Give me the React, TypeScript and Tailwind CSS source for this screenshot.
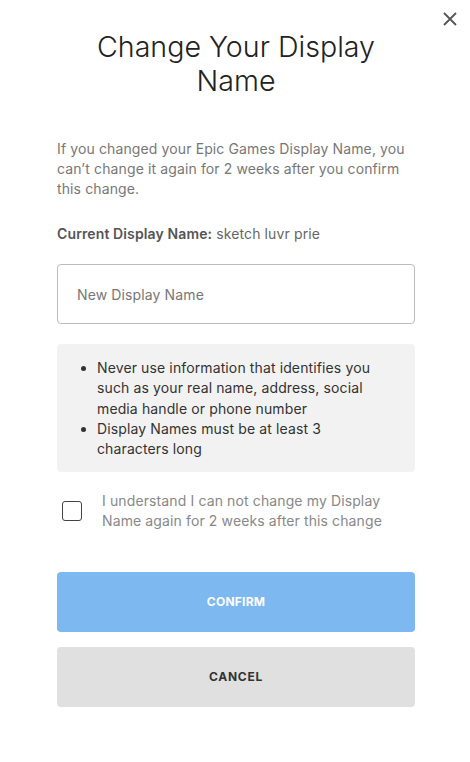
import { useState } from "react";

export default function App() {
  const [checked, setChecked] = useState(false);

  return (
    <div className="relative min-h-[762px] w-full bg-white font-['Inter',sans-serif] tracking-[0.12px]">
      <button className="absolute right-[12px] top-[11px] flex h-[16px] w-[16px] items-center justify-center text-[#555]">
        <svg width="16" height="16" viewBox="0 0 16 16" fill="none">
          <path d="M2 2L14 14M14 2L2 14" stroke="currentColor" strokeWidth="1.8" />
        </svg>
      </button>

      <div className="ml-[57px] w-[358px] pt-[30px]">
        <h1 className="text-center text-[28.6px] font-light leading-[34px] tracking-normal text-[#222]">
          Change Your Display
          <br />
          Name
        </h1>

        <p className="mt-[41px] text-[14px] leading-[20px] text-[#777]">
          If you changed your Epic Games Display Name, you can’t change it again for 2 weeks after you confirm this change.
        </p>

        <p className="mt-[25px] text-[14px] leading-[20px] text-[#666]">
          <span className="font-semibold text-[#555]">Current Display Name:</span> sketch luvr prie
        </p>

        <input
          placeholder="New Display Name"
          className="mt-[20px] h-[60px] w-full rounded-[4px] border border-[#bcbcbc] px-[19px] text-[14px] text-[#333] outline-none placeholder:text-[#777]"
        />

        <div className="mt-[20px] rounded-[4px] bg-[#f2f2f2] pb-[13px] pl-[40px] pr-[35px] pt-[14px]">
          <ul className="list-disc text-[14px] leading-[20.3px] text-[#333]">
            <li>Never use information that identifies you such as your real name, address, social media handle or phone number</li>
            <li>Display Names must be at least 3 characters long</li>
          </ul>
        </div>

        <label className="mt-[19px] flex items-center gap-[20px] pl-[5px]">
          <input
            type="checkbox"
            checked={checked}
            onChange={(e) => setChecked(e.target.checked)}
            className="h-[20px] w-[20px] shrink-0 appearance-none rounded-[3px] border border-[#444] bg-white"
          />
          <span className="text-[14px] leading-[20px] text-[#888]">
            I understand I can not change my Display Name again for 2 weeks after this change
          </span>
        </label>

        <div className="mt-[41px] flex flex-col gap-[15px]">
          <button className="h-[60px] w-full rounded-[4px] bg-[#7db8f0] text-[12px] font-bold tracking-[0.02em] text-white">
            CONFIRM
          </button>
          <button className="h-[60px] w-full rounded-[4px] bg-[#e0e0e0] text-[12px] font-bold tracking-[0.06em] text-[#333]">
            CANCEL
          </button>
        </div>
      </div>
    </div>
  );
}
